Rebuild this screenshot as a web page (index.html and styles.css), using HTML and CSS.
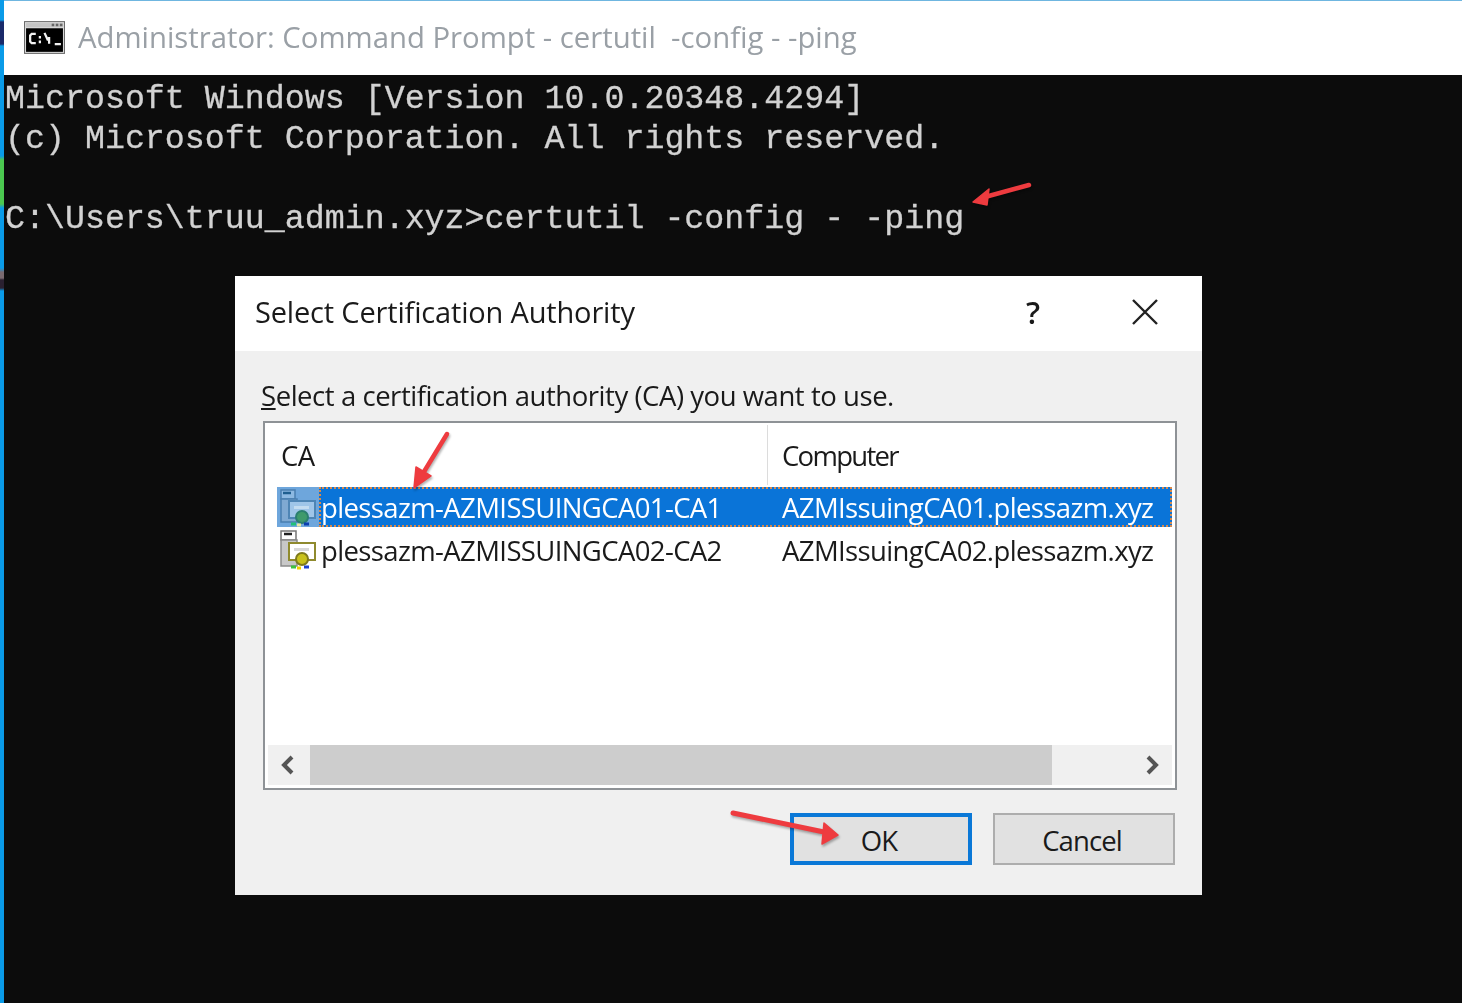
FILE: index.html
```html
<!DOCTYPE html>
<html lang="en">
<head>
<meta charset="utf-8">
<title>Select Certification Authority</title>
<link rel="stylesheet" href="styles.css">
</head>
<body>
<div class="screen">
  <div class="edge"></div>
  <main class="console">
    <header class="titlebar">
      <svg class="cmd-icon" viewBox="0 0 40 32" aria-hidden="true">
        <rect x="0.5" y="0.5" width="39" height="31" fill="#dcdcdc" stroke="#6a6a6a"/>
        <rect x="2" y="2" width="36" height="4" fill="#c4c4c4"/>
        <rect x="27" y="2.5" width="2.5" height="2.5" fill="#666"/><rect x="31" y="2.5" width="2.5" height="2.5" fill="#666"/><rect x="35" y="2.5" width="2.5" height="2.5" fill="#666"/>
        <rect x="2" y="7" width="36" height="23" fill="#000"/>
        <path d="M11.5 12.5H7.5L6 14v6l1.5 1.5h4M15.5 14.5v2.5M15.5 19v2.5M20 11.5l3 6.5h2.5M24.5 15.5v6.5M30 22.5h6" fill="none" stroke="#f2f2f2" stroke-width="2.2"/>
      </svg>
      <span class="title-text">Administrator: Command Prompt - certutil &nbsp;-config - -ping</span>
    </header>
    <pre class="output">Microsoft Windows [Version 10.0.20348.4294]
(c) Microsoft Corporation. All rights reserved.

C:\Users\truu_admin.xyz&gt;certutil -config - -ping</pre>
  </main>
</div>

<section class="dialog">
  <header class="dialog-head">
    <h1 class="dialog-title">Select Certification Authority</h1>
    <span class="help">?</span>
    <svg class="close" viewBox="0 0 26 26" aria-hidden="true"><path d="M1 1l24 24M25 1L1 25" fill="none" stroke="#222" stroke-width="2.4"/></svg>
  </header>
  <div class="dialog-body">
    <p class="prompt"><u>S</u>elect a certification authority (CA) you want to use.</p>
    <div class="list">
      <div class="list-head">
        <span class="col-ca">CA</span>
        <span class="col-computer">Computer</span>
      </div>
      <div class="row selected">
        <svg class="ca-icon" viewBox="0 0 42 40" aria-hidden="true">
          <rect x="0" y="0" width="42" height="40" fill="#6ea6dc"/>
          <path d="M4 3h14v9H4z" fill="#8db9e2" stroke="#4a7fb0" stroke-width="1.5"/>
          <path d="M6 6h8" stroke="#1f5f90" stroke-width="2.5"/>
          <path d="M4 12h16v23H4z" fill="#7fa9d2" stroke="#4a7fb0" stroke-width="1.5"/>
          <rect x="12" y="14" width="26" height="17" fill="#9fc5e8" stroke="#4e85b5" stroke-width="2"/>
          <rect x="17" y="19" width="15" height="3" fill="#c4dcf0"/>
          <circle cx="25" cy="30" r="6" fill="#3f9a6c" stroke="#2b7f70" stroke-width="2"/>
          <path d="M14 37h5" stroke="#22c07a" stroke-width="3"/><path d="M20 38h4" stroke="#e8e8a0" stroke-width="3"/><path d="M27 37h5" stroke="#0b3fb0" stroke-width="3"/>
        </svg>
        <div class="cells">
          <span class="cell-ca">plessazm-AZMISSUINGCA01-CA1</span>
          <span class="cell-computer">AZMIssuingCA01.plessazm.xyz</span>
        </div>
      </div>
      <div class="row">
        <svg class="ca-icon" viewBox="0 0 42 40" aria-hidden="true">
          <path d="M4 1h15v9H4z" fill="#fff" stroke="#777" stroke-width="1.5"/>
          <path d="M7 4h8" stroke="#222" stroke-width="2.5"/>
          <path d="M4 10h16v26H4z" fill="#c8c8c8" stroke="#8a8a8a" stroke-width="1.5"/>
          <rect x="12" y="13" width="26" height="17" fill="#fff" stroke="#8f8a2e" stroke-width="2"/>
          <rect x="17" y="18" width="15" height="3" fill="#d8d8d8"/>
          <circle cx="25" cy="29" r="6" fill="#c9c21c" stroke="#7f7a1c" stroke-width="2"/>
          <path d="M14 37h5" stroke="#3fc23f" stroke-width="3"/><path d="M20 38h4" stroke="#f0d000" stroke-width="3"/><path d="M27 37h5" stroke="#1b3fd0" stroke-width="3"/>
        </svg>
        <div class="cells">
          <span class="cell-ca">plessazm-AZMISSUINGCA02-CA2</span>
          <span class="cell-computer">AZMIssuingCA02.plessazm.xyz</span>
        </div>
      </div>
      <div class="list-fill"></div>
      <div class="scrollbar">
        <svg class="arrow-btn" viewBox="0 0 42 40" aria-hidden="true"><path d="M24 12l-8 8 8 8" fill="none" stroke="#555" stroke-width="4"/></svg>
        <div class="track"><div class="thumb"></div></div>
        <svg class="arrow-btn" viewBox="0 0 42 40" aria-hidden="true"><path d="M18 12l8 8-8 8" fill="none" stroke="#555" stroke-width="4"/></svg>
      </div>
    </div>
    <div class="actions">
      <button class="btn default" type="button">OK</button>
      <button class="btn" type="button">Cancel</button>
    </div>
  </div>
</section>

<svg class="annotations" viewBox="0 0 1462 1003" aria-hidden="true">
  <g fill="#ee3b3f" stroke="#ee3b3f" stroke-linecap="round" stroke-linejoin="round">
    <path d="M1029 185L985 197" stroke-width="4.5" fill="none"/>
    <path d="M973 202L989 189L987 205z" stroke-width="1.5"/>
    <path d="M447 434L422 475" stroke-width="4.5" fill="none"/>
    <path d="M414 488L416 467L431 476z" stroke-width="1.5"/>
    <path d="M733 813L824 832" stroke-width="5" fill="none"/>
    <path d="M838 835L824 823L822 844z" stroke-width="1.5"/>
  </g>
</svg>
</body>
</html>
```

FILE: styles.css
```css
* { box-sizing: border-box; }
html, body { margin: 0; height: 100%; overflow: hidden; background: #0c0c0c; }

.screen { display: flex; height: 1003px; }
.edge {
  width: 4px; flex: none;
  background: linear-gradient(#0a9be8 0 20px, #1a2a6a 22px 44px, #0a9be8 46px 156px, #4cc850 160px 204px, #0a9be8 208px 268px, #7a6a70 272px 278px, #2a2030 280px 288px, #0a9be8 291px 100%);
}
.console { flex: 1; display: flex; flex-direction: column; border-top: 1px solid #6fb6e0; }

.titlebar {
  height: 74px; flex: none; background: #fff;
  display: flex; align-items: center; gap: 13px; padding: 0 0 2px 20px;
}
.cmd-icon { width: 41px; height: 33px; flex: none; filter: blur(.5px); }
.title-text {
  font: 29.3px/1 "Open Sans", "Noto Sans", sans-serif;
  color: #9aa0a6; white-space: nowrap; filter: blur(.35px);
  padding-top: 2px;
}

.output {
  margin: 0; padding: 4px 0 0 1px;
  font: 33.3px/40px "Liberation Mono", monospace;
  color: #d2d2d2; filter: blur(.45px);
  -webkit-text-stroke: .3px #d2d2d2;
}

.dialog {
  position: absolute; left: 235px; top: 276px; width: 967px; height: 619px;
  background: #f0f0f0; display: flex; flex-direction: column;
  font-family: "Open Sans", "Noto Sans", sans-serif; color: #1a1a1a;
}
.dialog-head {
  height: 75px; flex: none; background: #fff;
  display: flex; align-items: center; padding: 0 44px 4px 20px;
}
.dialog-title { margin: 0; flex: 1; font-size: 29px; font-weight: 400; letter-spacing: -.17px; white-space: nowrap; filter: blur(.35px); }
.help { font-size: 31px; font-weight: 600; margin-right: 92px; filter: blur(.35px); }
.close { width: 26px; height: 26px; flex: none; filter: blur(.3px); }

.dialog-body { flex: 1; padding: 0 25px 30px 26px; display: flex; flex-direction: column; min-height: 0; }
.prompt { margin: 0; height: 70px; padding-top: 25px; font-size: 27.5px; letter-spacing: -.45px; line-height: 40px; white-space: nowrap; filter: blur(.35px); }

.list {
  height: 369px; flex: none; margin-left: 2px;
  border: 2px solid #8e9296; background: #fff; padding: 2px 3px 3px 3px;
  display: flex; flex-direction: column; overflow: hidden;
}
.list-head { height: 60px; flex: none; display: flex; align-items: stretch; font-size: 27.5px; letter-spacing: -.55px; }
.col-ca { width: 500px; padding: 6px 0 0 13px; line-height: 50px; border-right: 1px solid #dcdcdc; filter: blur(.3px); }
.col-computer { padding: 6px 0 0 14px; line-height: 50px; letter-spacing: -1.7px; filter: blur(.3px); }

.row { height: 43px; flex: none; display: flex; align-items: center; font-size: 27.5px; letter-spacing: -.62px; padding-left: 9px; white-space: nowrap; }
.ca-icon { width: 42px; height: 40px; flex: none; filter: blur(.4px); }
.cells { flex: 1; display: flex; height: 40px; line-height: 42px; }
.cell-ca { width: 463px; flex: none; padding-left: 2px; filter: blur(.3px); }
.cell-computer { flex: 1; filter: blur(.3px); }
.row.selected { color: #fff; }
.row.selected .cells { background: #0a74d8; outline: 2px dotted #d88a4c; outline-offset: -2px; }

.list-fill { flex: 1; }
.scrollbar { height: 40px; flex: none; display: flex; background: #f0f0f0; }
.arrow-btn { width: 42px; height: 40px; flex: none; }
.track { flex: 1; min-width: 0; }
.thumb { width: 742px; height: 100%; background: #cdcdcd; }

.actions { display: flex; justify-content: flex-end; gap: 21px; padding: 23px 2px 0 0; }
.btn {
  width: 182px; height: 52px; font: 27.5px "Open Sans", "Noto Sans", sans-serif; letter-spacing: -.9px;
  color: #1a1a1a; background: #e1e1e1; border: 2px solid #adadad; padding: 2px 4px 0 0;
}
.btn.default { border: 4px solid #0a78d7; }

.annotations { position: absolute; left: 0; top: 0; width: 1462px; height: 1003px; pointer-events: none; filter: drop-shadow(1px 2px 1px rgba(0,0,0,.3)); }
```
